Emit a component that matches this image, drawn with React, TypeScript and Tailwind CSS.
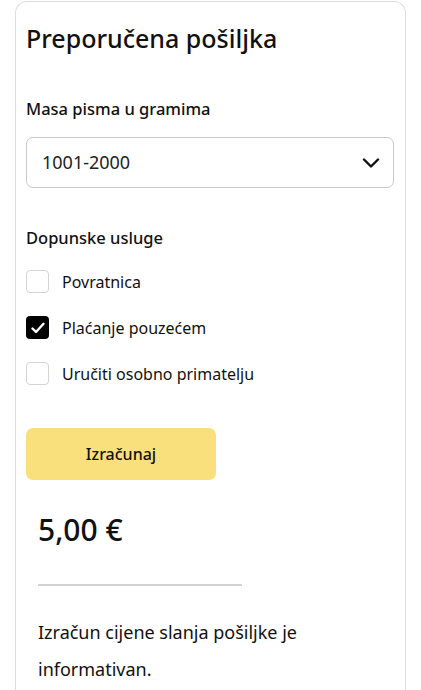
import React from "react";

function Box({ checked, label }: { checked?: boolean; label: string }) {
  return (
    <label className="flex items-center gap-[13px] h-[23px]">
      {checked ? (
        <span className="w-[23px] h-[23px] rounded-[4px] bg-black flex items-center justify-center">
          <svg width="14" height="12" viewBox="0 0 14 12" fill="none">
            <path d="M1.5 6.5 L5 10 L12.5 1.8" stroke="white" strokeWidth="2.4" strokeLinecap="round" strokeLinejoin="round" />
          </svg>
        </span>
      ) : (
        <span className="w-[23px] h-[23px] rounded-[4px] border border-[#d4d4d4] bg-white" />
      )}
      <span className="text-[16px] text-[#111]">{label}</span>
    </label>
  );
}

export default function App() {
  return (
    <div className="bg-white min-h-[690px] overflow-hidden" style={{ fontFamily: '"Noto Sans", sans-serif' }}>
      <div className="mx-[15px] mt-[1px] border border-[#dcdcdc] border-b-0 rounded-t-[12px] pl-[10px] pr-[11px] pt-[19px] pb-[40px] h-[700px]">
        <h1 className="text-[25px] leading-[34px] font-medium text-[#111]">Preporučena pošiljka</h1>
        <div className="mt-[43px] text-[16.5px] leading-[22px] font-medium text-[#111]">Masa pisma u gramima</div>
        <div className="mt-[17px] h-[51px] border border-[#c8c8c8] rounded-[7px] flex items-center justify-between pl-[15px] pr-[13px]">
          <span className="text-[18px] text-[#222]">1001-2000</span>
          <svg width="18" height="10" viewBox="0 0 18 10" fill="none">
            <path d="M2 1.5 L9 8.5 L16 1.5" stroke="#111" strokeWidth="2.4" strokeLinecap="round" strokeLinejoin="round" />
          </svg>
        </div>
        <div className="mt-[39px] text-[16.5px] leading-[22px] font-medium text-[#111]">Dopunske usluge</div>
        <div className="mt-[21px] flex flex-col gap-[23px]">
          <Box label="Povratnica" />
          <Box checked label="Plaćanje pouzećem" />
          <Box label="Uručiti osobno primatelju" />
        </div>
        <button className="mt-[43px] w-[190px] h-[52px] rounded-[7px] bg-[#fae07c] text-[16px] font-medium text-[#111]">
          Izračunaj
        </button>
        <div className="pl-[12px]">
          <div className="mt-[30px] text-[30px] leading-[40px] font-medium text-[#111]">5,00 €</div>
          <div className="mt-[34px] w-[204px] h-[2px] bg-[#d2d2d2]" />
          <p className="mt-[28px] text-[18px] leading-[37px] text-[#111] w-[300px]">
            Izračun cijene slanja pošiljke je informativan.
          </p>
        </div>
      </div>
    </div>
  );
}
